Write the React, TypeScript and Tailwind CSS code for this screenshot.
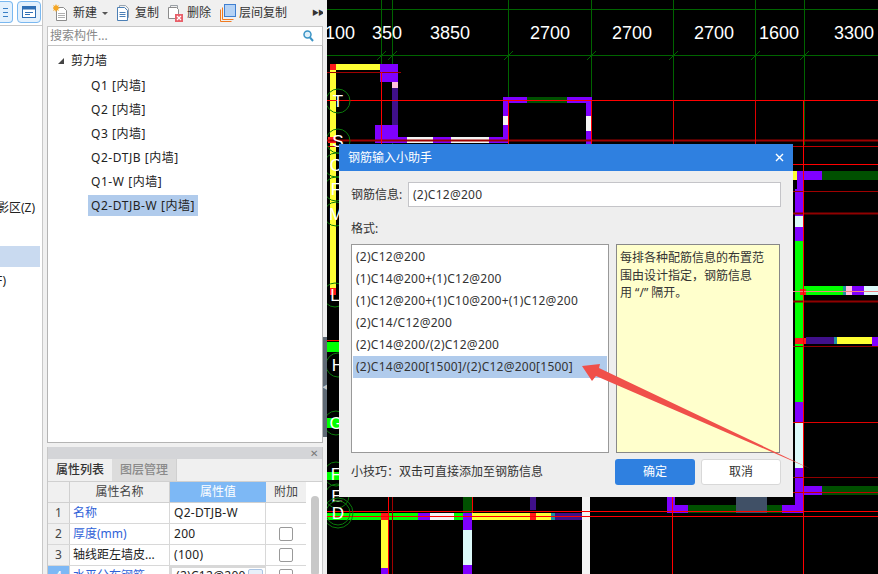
const FONT = '"Noto Sans", "Noto Sans CJK SC", sans-serif';

const PURPLE = '#8000ff';
const DARKP = '#40108a';
const GREEN = '#00ff00';
const DGREEN = '#005000';
const YELLOW = '#ffff33';
const WHITE = '#f4f4f4';
const CYAN = '#dcfafa';
const RED = '#ff1a1a';
const GRID = '#006400';

// x, y, w, h, colour
const walls: [number, number, number, number, string][] = [
  [330, 64, 50, 6, YELLOW],
  [330, 64, 6, 226, YELLOW],
  [330, 64, 6, 6, RED],
  [330, 288, 6, 7, RED],
  [380, 64, 18, 18, PURPLE],
  [392, 82, 6, 6, '#ffc0e0'],
  [392, 88, 6, 37, DARKP],
  [375, 125, 23, 18, PURPLE],
  [398, 137, 9, 6, PURPLE],
  [407, 137, 26, 6, WHITE],
  [433, 137, 18, 6, PURPLE],
  [451, 137, 38, 6, WHITE],
  [489, 137, 19, 6, PURPLE],
  [503, 97, 5, 46, PURPLE],
  [503, 116, 5, 9, WHITE],
  [503, 97, 24, 6, PURPLE],
  [527, 97, 40, 6, DGREEN],
  [567, 97, 25, 6, PURPLE],
  [586, 97, 6, 50, PURPLE],
  [586, 116, 6, 15, WHITE],
  [328, 137, 8, 6, RED],
  [793, 171, 4, 9, YELLOW],
  [797, 171, 25, 9, PURPLE],
  [822, 171, 56, 9, DGREEN],
  [797, 171, 6, 20, PURPLE],
  [795, 189, 8, 27, PURPLE],
  [795, 216, 8, 11, CYAN],
  [795, 227, 8, 14, PURPLE],
  [795, 241, 8, 161, GREEN],
  [795, 402, 8, 21, PURPLE],
  [795, 423, 8, 45, CYAN],
  [795, 468, 8, 45, PURPLE],
  [803, 286, 40, 9, GREEN],
  [843, 286, 3, 9, '#2090a0'],
  [846, 286, 6, 9, '#ffc0e0'],
  [852, 286, 12, 9, PURPLE],
  [864, 286, 14, 9, CYAN],
  [800, 289, 6, 6, RED],
  [795, 338, 11, 6, RED],
  [806, 337, 28, 7, DARKP],
  [834, 337, 3, 7, '#2090a0'],
  [837, 337, 35, 7, YELLOW],
  [872, 337, 6, 9, PURPLE],
  [803, 486, 19, 9, PURPLE],
  [822, 486, 56, 9, DGREEN],
  [667, 497, 8, 16, PURPLE],
  [667, 505, 21, 8, PURPLE],
  [688, 505, 48, 8, DGREEN],
  [736, 497, 31, 16, '#405066'],
  [767, 505, 15, 8, DGREEN],
  [782, 505, 21, 8, PURPLE],
  [327, 513, 91, 7, GREEN],
  [381, 513, 7, 7, RED],
  [418, 513, 12, 7, PURPLE],
  [430, 513, 24, 7, WHITE],
  [454, 513, 9, 7, GREEN],
  [463, 513, 9, 17, PURPLE],
  [472, 513, 79, 7, YELLOW],
  [530, 513, 6, 7, RED],
  [551, 513, 4, 7, '#2090a0'],
  [555, 513, 27, 7, DARKP],
  [582, 497, 8, 77, WHITE],
  [381, 520, 7, 48, YELLOW],
  [381, 568, 7, 6, PURPLE],
  [463, 530, 9, 35, CYAN],
  [463, 565, 9, 9, PURPLE],
  [463, 497, 9, 16, DGREEN],
  [530, 497, 6, 13, DARKP],
  [327, 342, 12, 10, GREEN],
  [327, 418, 12, 10, GREEN],
  [327, 472, 12, 8, GREEN],
];

const greenV = [381, 392, 508, 591, 673, 755, 804];
const dims: [number, string][] = [
  [340, '100'],
  [387, '350'],
  [450, '3850'],
  [550, '2700'],
  [632, '2700'],
  [714, '2700'],
  [779, '1600'],
  [854, '3300'],
];
const axes: [number, number, string][] = [
  [338, 101, 'T'],
  [338, 141, 'S'],
  [336, 165, 'C'],
  [336, 189, 'F'],
  [336, 214, 'M'],
  [335, 295, 'L'],
  [338, 365, 'H'],
  [336, 423, 'G'],
  [336, 474, 'F'],
  [337, 496, 'E'],
  [338, 513, 'D'],
];

function Canvas() {
  return (
    <svg width="551" height="574" viewBox="327 0 551 574" className="block shrink-0">
      <rect x="327" y="0" width="551" height="574" fill="#000" />
      <line x1="327" x2="878" y1="9.5" y2="9.5" stroke={GRID} />
      <line x1="327" x2="878" y1="55.5" y2="55.5" stroke={GRID} />
      {greenV.map((x) => (
        <g key={x}>
          <line x1={x + 0.5} x2={x + 0.5} y1="0" y2="145" stroke={GRID} />
          <line x1={x - 4} x2={x + 5} y1="60" y2="51" stroke={GRID} />
        </g>
      ))}
      {walls.map((r, i) => (
        <rect key={i} x={r[0]} y={r[1]} width={r[2]} height={r[3]} fill={r[4]} />
      ))}
      <line x1="327" x2="401" y1="72.5" y2="72.5" stroke="#a00000" />
      <line x1="327" x2="878" y1="100.5" y2="100.5" stroke="#ff0000" />
      <line x1="327" x2="878" y1="140.5" y2="140.5" stroke="#a00000" strokeWidth="2" />
      <line x1="327" x2="878" y1="146.5" y2="146.5" stroke="#c00000" />
      <line x1="793" x2="878" y1="164.5" y2="164.5" stroke="#ff0000" />
      <line x1="793" x2="878" y1="191.5" y2="191.5" stroke="#a00000" />
      <line x1="793" x2="878" y1="213.5" y2="213.5" stroke="#900000" strokeWidth="2" />
      <line x1="793" x2="878" y1="291.5" y2="291.5" stroke="#f08080" />
      <line x1="793" x2="878" y1="301.5" y2="301.5" stroke="#900000" strokeWidth="2" />
      <line x1="793" x2="878" y1="346.5" y2="346.5" stroke="#900000" />
      <line x1="793" x2="878" y1="422.5" y2="422.5" stroke="#e00000" />
      <line x1="793" x2="878" y1="477.5" y2="477.5" stroke="#900000" />
      <line x1="793" x2="878" y1="492.5" y2="492.5" stroke="#c00000" />
      <line x1="327" x2="339" y1="340.5" y2="340.5" stroke="#ff0000" />
      <line x1="327" x2="878" y1="511.5" y2="511.5" stroke="#ff0000" />
      <line x1="327" x2="878" y1="516.5" y2="516.5" stroke="#ff0000" />
      <line x1="381.5" x2="381.5" y1="72" y2="144" stroke="#ff0000" />
      <line x1="508.5" x2="508.5" y1="100" y2="144" stroke="#ff0000" />
      <line x1="591.5" x2="591.5" y1="100" y2="144" stroke="#ff0000" />
      <line x1="673.5" x2="673.5" y1="100" y2="144" stroke="#e00000" />
      <line x1="755.5" x2="755.5" y1="100" y2="144" stroke="#e00000" />
      <line x1="803.5" x2="803.5" y1="100" y2="574" stroke="#ff0000" />
      <line x1="388.5" x2="388.5" y1="497" y2="574" stroke="#ff0000" />
      <line x1="392.5" x2="392.5" y1="497" y2="574" stroke="#a00000" />
      <line x1="472.5" x2="472.5" y1="497" y2="513" stroke="#ff0000" />
      <line x1="672.5" x2="672.5" y1="497" y2="574" stroke="#ff0000" />
      {axes.map(([x, y, t]) => (
        <g key={t + y}>
          <circle cx={x} cy={y} r="12" fill="none" stroke="#0a7a0a" />
          <text x={x} y={y + 6} textAnchor="middle" fill="#fff" fontSize="17" fontFamily="Liberation Sans, sans-serif">
            {t}
          </text>
        </g>
      ))}
      <circle cx="338" cy="513" r="15" fill="none" stroke="#0a7a0a" />
      {dims.map(([x, t]) => (
        <text key={x} x={x} y="39" textAnchor="middle" fill="#fff" fontSize="18" fontFamily="Liberation Sans, sans-serif">
          {t}
        </text>
      ))}
    </svg>
  );
}

function NewIcon() {
  return (
    <svg width="15" height="18" viewBox="0 0 15 18" className="shrink-0">
      <path d="M3.5 3.5h7l3 3v10h-10z" fill="#fff" stroke="#8c8c8c" />
      <path d="M5 9.5h7M5 11.5h7M5 13.5h7" stroke="#b0b0b0" />
      <path d="M3 0l1 2 2-1-1 2 2 1-2 1 1 2-2-1-1 2-1-2-2 1 1-2-2-1 2-1-1-2 2 1z" fill="#f5a623" />
    </svg>
  );
}

function CopyIcon() {
  return (
    <svg width="14" height="16" viewBox="0 0 14 16" className="shrink-0">
      <path d="M2.5 2.5V.5h6l3 3v9h-2" fill="none" stroke="#9aa5b0" />
      <path d="M.5 2.5h7l3 3v10H.5z" fill="#fff" stroke="#4b7fb5" />
      <path d="M2.5 7.5h6M2.5 9.5h6M2.5 11.5h6" stroke="#4b7fb5" />
    </svg>
  );
}

function DeleteIcon() {
  return (
    <svg width="15" height="17" viewBox="0 0 15 17" className="shrink-0">
      <path d="M2.5 2.5V.5h7v3" fill="none" stroke="#9aa0a6" />
      <path d="M.5 2.5h8l2 2v9H.5z" fill="#fff" stroke="#8c8c8c" />
      <rect x="7" y="9" width="8" height="8" fill="#e8606a" />
      <path d="M9 11l4 4M13 11l-4 4" stroke="#fff" strokeWidth="1.2" />
    </svg>
  );
}

function FloorCopyIcon() {
  return (
    <svg width="16" height="18" viewBox="0 0 16 18" className="shrink-0">
      <path d="M.5 5.5v12h11" fill="none" stroke="#f07a20" />
      <path d="M2.5 3.5v12h11" fill="none" stroke="#f07a20" />
      <rect x="4.5" y="0.5" width="11" height="12" fill="#b4d2f5" stroke="#3f7fd0" />
    </svg>
  );
}

function SearchIcon() {
  return (
    <svg width="11" height="12" viewBox="0 0 11 12">
      <circle cx="4.5" cy="4.5" r="3.5" fill="#dff0fa" stroke="#3a93c5" strokeWidth="1.5" />
      <path d="M7 7.5l3 3.5" stroke="#3a93c5" strokeWidth="2" />
    </svg>
  );
}

function Toolbar() {
  return (
    <div className="flex h-[27px] items-center whitespace-nowrap border-b border-[#c8c8c8] bg-[#f0f0f0] pl-[6px] text-[12px] text-[#333]">
      <NewIcon />
      <span className="ml-[5px]">新建</span>
      <span className="ml-[5px] h-0 w-0 border-x-[3px] border-t-[3px] border-x-transparent border-t-[#555]" />
      <span className="ml-[9px] flex"><CopyIcon /></span>
      <span className="ml-[4px]">复制</span>
      <span className="ml-[9px] flex"><DeleteIcon /></span>
      <span className="ml-[4px]">删除</span>
      <span className="ml-[9px] flex"><FloorCopyIcon /></span>
      <span className="ml-[3px]">层间复制</span>
      <span className="ml-[25px] text-[7px] tracking-[-1px] text-[#333]">▶▶</span>
    </div>
  );
}

const treeItems = ['Q1 [内墙]', 'Q2 [内墙]', 'Q3 [内墙]', 'Q2-DTJB [内墙]', 'Q1-W [内墙]', 'Q2-DTJB-W [内墙]'];

function Tree() {
  return (
    <div className="flex-1 border-x border-b border-[#b4b4b4] bg-white pt-[3px] text-[12px] text-[#222]">
      <div className="flex h-[24px] items-center pl-[10px]">
        <span className="mr-[7px] h-0 w-0 border-b-[6px] border-l-[6px] border-b-[#444] border-l-transparent" />
        <span>剪力墙</span>
      </div>
      {treeItems.map((t, i) => (
        <div key={t} className="flex h-[24px] items-center pl-[43px]">
          <span className={`-mx-[3px] px-[3px] leading-[21px] tracking-[0.55px] ${i === 5 ? 'bg-[#b0cbec]' : ''}`}>{t}</span>
        </div>
      ))}
    </div>
  );
}

const rows = [
  { n: '1', name: '名称', value: 'Q2-DTJB-W', blue: true, check: false },
  { n: '2', name: '厚度(mm)', value: '200', blue: true, check: true },
  { n: '3', name: '轴线距左墙皮...', value: '(100)', blue: false, check: true },
  { n: '4', name: '水平分布钢筋', value: '(2)C12@200', blue: true, check: true, active: true },
];

function PropTable() {
  return (
    <div className="relative h-[127px] overflow-hidden border-x border-[#c8c8c8] bg-white text-[12px]">
      <div className="flex h-[12px] items-center justify-end bg-[#d4d5d8] pr-[4px] text-[10px] leading-none text-[#777]">✕</div>
      <div className="flex h-[23px] border-b border-[#d0d0d0] bg-[#f0f0f0]">
        <div className="flex w-[64px] items-center justify-center font-medium text-[#333]">属性列表</div>
        <div className="flex w-[65px] items-center justify-center border-r border-[#d0d0d0] bg-[#dcdcdc] font-medium text-[#8a8a8a]">图层管理</div>
      </div>
      <div className="w-[258px]">
        <div className="flex h-[21px] border-b border-[#d0d0d0] bg-[#f0f0f0] text-[#444]">
          <div className="w-[22px] border-r border-[#d0d0d0]" />
          <div className="flex w-[100px] items-center justify-center border-r border-[#d0d0d0]">属性名称</div>
          <div className="flex w-[96px] items-center justify-center bg-[#7db8f5] text-white">属性值</div>
          <div className="flex w-[40px] items-center justify-center">附加</div>
        </div>
        {rows.map((r) => (
          <div key={r.n} className="flex h-[21px] border-b border-[#d8d8d8]">
            <div className={`flex w-[22px] items-center justify-center border-r border-[#d0d0d0] ${r.active ? 'bg-[#7db8f5] text-white' : 'bg-[#f0f0f0] text-[#444]'}`}>
              {r.n}
            </div>
            <div className={`flex w-[100px] items-center whitespace-nowrap border-r border-[#d8d8d8] pl-[3px] ${r.blue ? 'text-[#2f62d8]' : 'text-[#222]'}`}>
              {r.name}
            </div>
            <div className={`flex w-[96px] items-center border-r border-[#d8d8d8] pl-[4px] tracking-[0.3px] text-[#222] ${r.active ? 'border-2 border-[#5b9ee8]' : ''}`}>
              {r.value}
              {r.active && <span className="ml-auto mr-[2px] h-[14px] w-[15px] rounded-[2px] border border-[#aac4e4] bg-[#e8f0fa]" />}
            </div>
            <div className="flex w-[40px] items-center justify-center">
              {r.check && <span className="h-[14px] w-[14px] rounded-[2px] border border-[#999] bg-white" />}
            </div>
          </div>
        ))}
      </div>
      <div className="absolute right-[3px] top-[49px] h-[80px] w-[8px] rounded-[4px] bg-[#c8c8c8]" />
    </div>
  );
}

function Panel() {
  return (
    <div className="ml-[4px] flex h-full w-[276px] shrink-0 flex-col">
      <Toolbar />
      <div className="flex h-[19px] items-center justify-between border-x border-b border-[#c4c4c4] bg-white pl-[2px] pr-[8px] text-[12px] text-[#888]">
        <span>搜索构件...</span>
        <SearchIcon />
      </div>
      <Tree />
      <div className="h-[4px] bg-[#f0f0f0]" />
      <PropTable />
    </div>
  );
}

const formats = [
  '(2)C12@200',
  '(1)C14@200+(1)C12@200',
  '(1)C12@200+(1)C10@200+(1)C12@200',
  '(2)C14/C12@200',
  '(2)C14@200/(2)C12@200',
  '(2)C14@200[1500]/(2)C12@200[1500]',
];

function Dialog() {
  return (
    <div className="absolute left-[339px] top-[144px] flex h-[353px] w-[454px] flex-col bg-[#eeeeee] text-[12px] text-[#333]">
      <div className="flex h-[27px] items-center justify-between bg-[#2f80e0] pl-[9px] pr-[9px] text-white">
        <span>钢筋输入小助手</span>
        <svg width="9" height="9" viewBox="0 0 9 9">
          <path d="M1 1l7 7M8 1L1 8" stroke="#fff" strokeWidth="1.4" />
        </svg>
      </div>
      <div className="flex flex-1 flex-col pl-[12px] pr-[12px]">
        <div className="mt-[11px] flex items-center">
          <span className="w-[57px] pt-px">钢筋信息:</span>
          <div className="flex h-[25px] flex-1 items-center border border-[#c4c4c8] bg-white pl-[4px] pr-0 pt-px tracking-[0.25px]">(2)C12@200</div>
        </div>
        <div className="mt-[13px] h-[24px] leading-[18px]">格式:</div>
        <div className="flex h-[209px] gap-[7px]">
          <div className="w-[258px] border border-[#999] bg-white pl-px pr-px pt-px">
            {formats.map((f, i) => (
              <div key={f} className={`flex h-[22px] items-center pl-[3px] tracking-[0.25px] ${i === 5 ? 'bg-[#b0cbec]' : ''}`}>
                {f}
              </div>
            ))}
          </div>
          <div className="w-[164px] border border-[#888] bg-[#ffffcc] pl-[3px] pt-[4px] leading-[17.5px]">
            每排各种配筋信息的布置范
            <br />
            围由设计指定，钢筋信息
            <br />
            用 “/” 隔开。
          </div>
        </div>
        <div className="mt-[6px] flex h-[26px] items-center">
          <span className="flex-1">小技巧：双击可直接添加至钢筋信息</span>
          <button className="h-[26px] w-[80px] rounded-[3px] bg-[#2f80e0] text-white">确定</button>
          <button className="ml-[6px] h-[26px] w-[80px] rounded-[3px] border border-[#d8d8d8] bg-white">取消</button>
        </div>
      </div>
    </div>
  );
}

export default function App() {
  return (
    <div className="relative flex h-[574px] w-[878px] overflow-hidden bg-[#f0f0f0]" style={{ fontFamily: FONT }}>
      <div className="flex h-full w-[43px] shrink-0 flex-col border-r border-[#c8c8c8] bg-white text-[12px] text-[#222]">
        <div className="flex h-[26px] items-start justify-end gap-[4px] border-b border-[#c8c8c8] pr-px pt-px">
          <div className="flex h-[22px] w-[13px] flex-col items-start justify-center gap-[3px] rounded-r-[4px] border border-l-0 border-[#7ab8f0] bg-[#e4f1fd] pl-[3px]">
            <span className="h-px w-[5px] bg-[#3a7fc5]" />
            <span className="h-px w-[5px] bg-[#3a7fc5]" />
            <span className="h-px w-[5px] bg-[#3a7fc5]" />
          </div>
          <div className="flex h-[22px] w-[24px] items-center justify-center rounded-[4px] border border-[#7ab8f0] bg-[#e4f1fd]">
            <svg width="14" height="12" viewBox="0 0 14 12">
              <rect x="0.5" y="0.5" width="13" height="11" fill="#fff" stroke="#2f6fb5" />
              <rect x="0.5" y="0.5" width="13" height="3" fill="#2f6fb5" />
              <path d="M3 6.5h8M3 8.5h5" stroke="#2f6fb5" />
            </svg>
          </div>
        </div>
        <div className="mt-[172px] flex h-[20px] items-center justify-end overflow-hidden whitespace-nowrap pr-[7px]">阴影区(Z)</div>
        <div className="mt-[28px] h-[21px] w-[40px] bg-[#c9daf0]" />
        <div className="mt-[4px] flex h-[20px] items-center overflow-hidden whitespace-nowrap"><span className="-ml-[4px]">F)</span></div>
      </div>
      <Panel />
      <div className="flex h-full w-[4px] shrink-0 flex-col bg-[#f0f0f0]">
        <div className="mt-[337px] flex h-[100px] items-center justify-center overflow-hidden bg-[#5f6a75] text-[6px] leading-none text-[#c8c8c8]">◀</div>
      </div>
      <Canvas />
      <Dialog />
      <svg className="absolute left-0 top-0" width="878" height="574" viewBox="0 0 878 574">
        <path d="M582 366 L600 364 L599 368 L811 469 L596 376 L592 381 Z" fill="#f0504a" />
      </svg>
    </div>
  );
}
